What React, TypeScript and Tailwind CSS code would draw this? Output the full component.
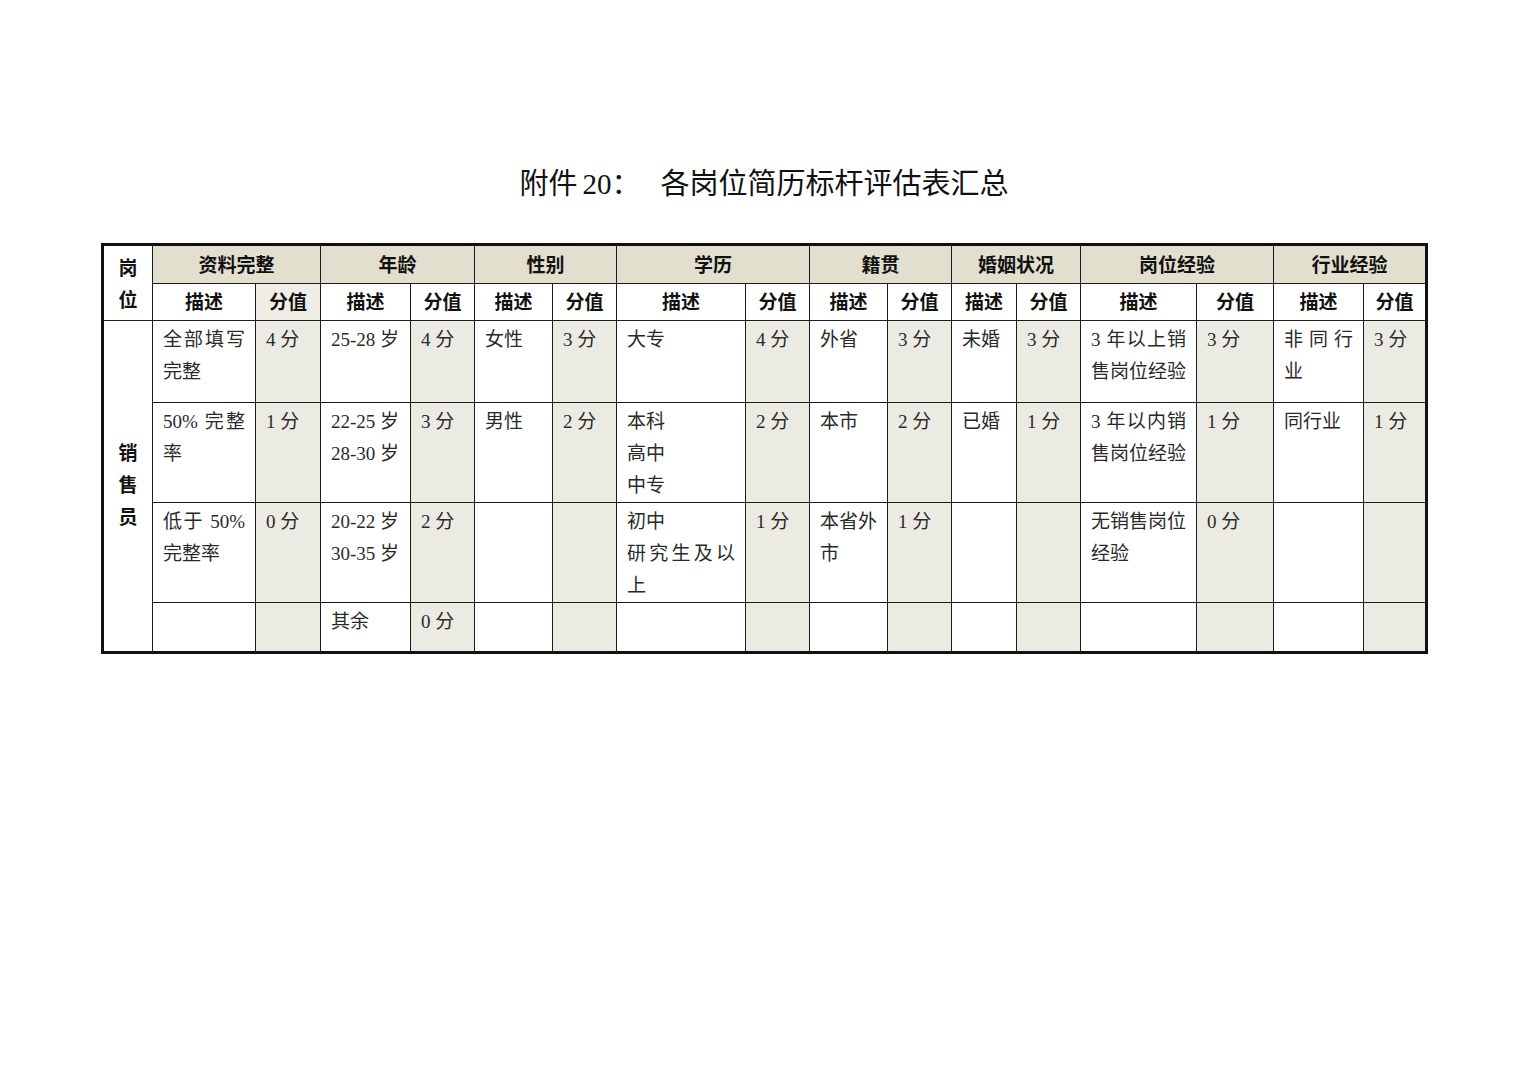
import React from "react"

type Line = string | [string, boolean]
type Pair = { desc: Line[]; score: string }

const groups = ["资料完整", "年龄", "性别", "学历", "籍贯", "婚姻状况", "岗位经验", "行业经验"]

// widths of each 描述 / 分值 pair, in px
const widths: [number, number][] = [
  [103, 65],
  [90, 64],
  [78, 64],
  [129, 64],
  [78, 64],
  [65, 64],
  [116, 77],
  [90, 63],
]

const E: Pair = { desc: [], score: "" }

const rows: { h: string; cells: Pair[] }[] = [
  {
    h: "h-[82px]",
    cells: [
      { desc: [["全部填写", true], "完整"], score: "4 分" },
      { desc: ["25-28 岁"], score: "4 分" },
      { desc: ["女性"], score: "3 分" },
      { desc: ["大专"], score: "4 分" },
      { desc: ["外省"], score: "3 分" },
      { desc: ["未婚"], score: "3 分" },
      { desc: [["3 年以上销", true], "售岗位经验"], score: "3 分" },
      { desc: [["非同行", true], "业"], score: "3 分" },
    ],
  },
  {
    h: "h-[100px]",
    cells: [
      { desc: [["50% 完整", true], "率"], score: "1 分" },
      { desc: ["22-25 岁", "28-30 岁"], score: "3 分" },
      { desc: ["男性"], score: "2 分" },
      { desc: ["本科", "高中", "中专"], score: "2 分" },
      { desc: ["本市"], score: "2 分" },
      { desc: ["已婚"], score: "1 分" },
      { desc: [["3 年以内销", true], "售岗位经验"], score: "1 分" },
      { desc: ["同行业"], score: "1 分" },
    ],
  },
  {
    h: "h-[99px]",
    cells: [
      { desc: [["低于 50%", true], "完整率"], score: "0 分" },
      { desc: ["20-22 岁", "30-35 岁"], score: "2 分" },
      E,
      { desc: ["初中", ["研究生及以", true], "上"], score: "1 分" },
      { desc: ["本省外", "市"], score: "1 分" },
      E,
      { desc: ["无销售岗位", "经验"], score: "0 分" },
      E,
    ],
  },
  {
    h: "h-[50px]",
    cells: [E, { desc: ["其余"], score: "0 分" }, E, E, E, E, E, E],
  },
]

const cell = "border border-[#1c1c1c] align-top px-[10px] pt-[3px] text-[19px] leading-[32px] text-[#2a2a2a]"
const head = "border border-[#1c1c1c] text-center font-bold text-[19px] text-[#111]"

function Desc({ lines }: { lines: Line[] }) {
  return (
    <>
      {lines.map((l, i) => {
        const [text, justify] = typeof l === "string" ? [l, false] : l
        return (
          <div key={i} className={justify ? "whitespace-nowrap text-justify [text-align-last:justify]" : "whitespace-nowrap"}>
            {text}
          </div>
        )
      })}
    </>
  )
}

export default function App() {
  return (
    <div
      className="min-h-[1080px] w-full bg-white pt-[164px]"
      style={{ fontFamily: '"Liberation Serif", "Noto Sans CJK SC", serif' }}
    >
      <h1 className="text-center text-[29px] leading-[40px] font-normal text-[#111]">
        附件<span className="ml-[5px]">20：</span>
        <span className="ml-[20px]">各岗位简历标杆评估表汇总</span>
      </h1>

      <table className="mt-[39px] ml-[101px] w-[1325px] table-fixed border-collapse border-[3px] border-[#111]">
        <colgroup>
          <col className="w-[50px]" />
          {widths.map(([d, s], i) => (
            <React.Fragment key={i}>
              <col style={{ width: d }} />
              <col style={{ width: s }} />
            </React.Fragment>
          ))}
        </colgroup>
        <thead>
          <tr className="h-[39px]">
            <th rowSpan={2} className={`${head} bg-white leading-[32px] pt-[4px]`}>
              <div>岗</div>
              <div>位</div>
            </th>
            {groups.map((g) => (
              <th key={g} colSpan={2} className={`${head} bg-[#e2dfcf] pt-[4px]`}>
                {g}
              </th>
            ))}
          </tr>
          <tr className="h-[37px]">
            {groups.map((g, i) => (
              <React.Fragment key={g}>
                <th className={`${head} bg-white pt-[2px]`}>描述</th>
                <th className={`${head} pt-[2px] ${i === 0 ? "bg-[#efede6]" : "bg-white"}`}>分值</th>
              </React.Fragment>
            ))}
          </tr>
        </thead>
        <tbody>
          {rows.map((r, ri) => (
            <tr key={ri} className={r.h}>
              {ri === 0 && (
                <td rowSpan={4} className="border border-[#1c1c1c] text-center align-middle font-bold text-[19px] leading-[32px] text-[#111]">
                  <div>销</div>
                  <div>售</div>
                  <div>员</div>
                </td>
              )}
              {r.cells.map((c, ci) => (
                <React.Fragment key={ci}>
                  <td className={`${cell} bg-white`}>
                    <Desc lines={c.desc} />
                  </td>
                  <td className={`${cell} bg-[#ecebe3] whitespace-nowrap`}>{c.score}</td>
                </React.Fragment>
              ))}
            </tr>
          ))}
        </tbody>
      </table>
    </div>
  )
}
